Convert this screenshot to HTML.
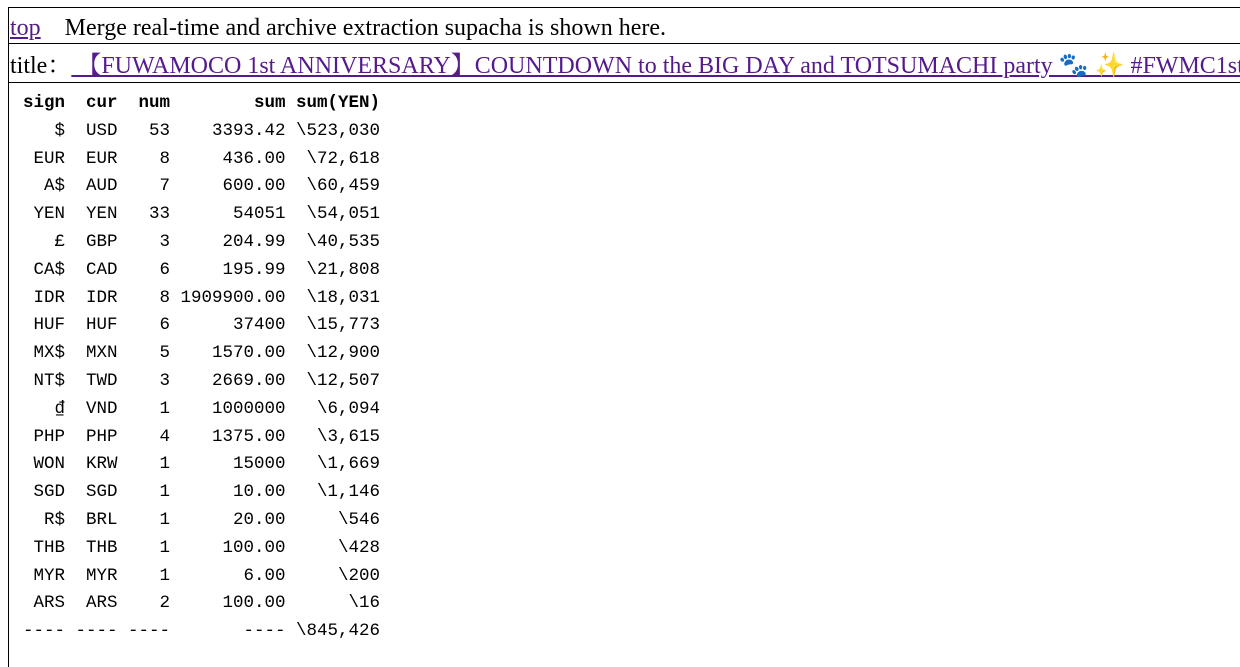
<!DOCTYPE html>
<html><head><meta charset="utf-8"><style>
html,body{margin:0;padding:0;background:#fff;}
body{width:1240px;height:649px;overflow:hidden;position:relative;}
.box{position:absolute;left:8px;top:7px;width:1240px;height:660px;border-left:1px solid #000;}
.row{position:absolute;left:8px;width:1232px;border-top:1px solid #000;font-family:"Liberation Serif","Noto Serif CJK SC",serif;font-size:24px;color:#000;white-space:nowrap;overflow:hidden;}
a{color:#551a8b;text-decoration:underline;}
pre{position:absolute;left:23px;top:90px;margin:0;font-family:"Liberation Mono","DejaVu Sans Mono",monospace;font-size:17.5px;line-height:27.8px;color:#000;}
b{font-weight:bold;}
</style></head><body>
<div class="box"></div>
<div class="row" style="top:7px;height:36px;line-height:40px;padding-left:2px;"><a href="#">top</a>&nbsp;&nbsp;&nbsp; Merge real-time and archive extraction supacha is shown here.</div>
<div class="row" style="top:43px;height:38px;line-height:44px;padding-left:2px;border-bottom:1px solid #000;">title：<a href="#">&nbsp;【FUWAMOCO 1st ANNIVERSARY】COUNTDOWN to the BIG DAY and TOTSUMACHI party 🐾 ✨ #FWMC1st</a></div>
<pre><b>sign  cur  num        sum sum(YEN)</b>
   $  USD   53    3393.42 \523,030
 EUR  EUR    8     436.00  \72,618
  A$  AUD    7     600.00  \60,459
 YEN  YEN   33      54051  \54,051
   £  GBP    3     204.99  \40,535
 CA$  CAD    6     195.99  \21,808
 IDR  IDR    8 1909900.00  \18,031
 HUF  HUF    6      37400  \15,773
 MX$  MXN    5    1570.00  \12,900
 NT$  TWD    3    2669.00  \12,507
   ₫  VND    1    1000000   \6,094
 PHP  PHP    4    1375.00   \3,615
 WON  KRW    1      15000   \1,669
 SGD  SGD    1      10.00   \1,146
  R$  BRL    1      20.00     \546
 THB  THB    1     100.00     \428
 MYR  MYR    1       6.00     \200
 ARS  ARS    2     100.00      \16
---- ---- ----       ---- \845,426</pre>
</body></html>
